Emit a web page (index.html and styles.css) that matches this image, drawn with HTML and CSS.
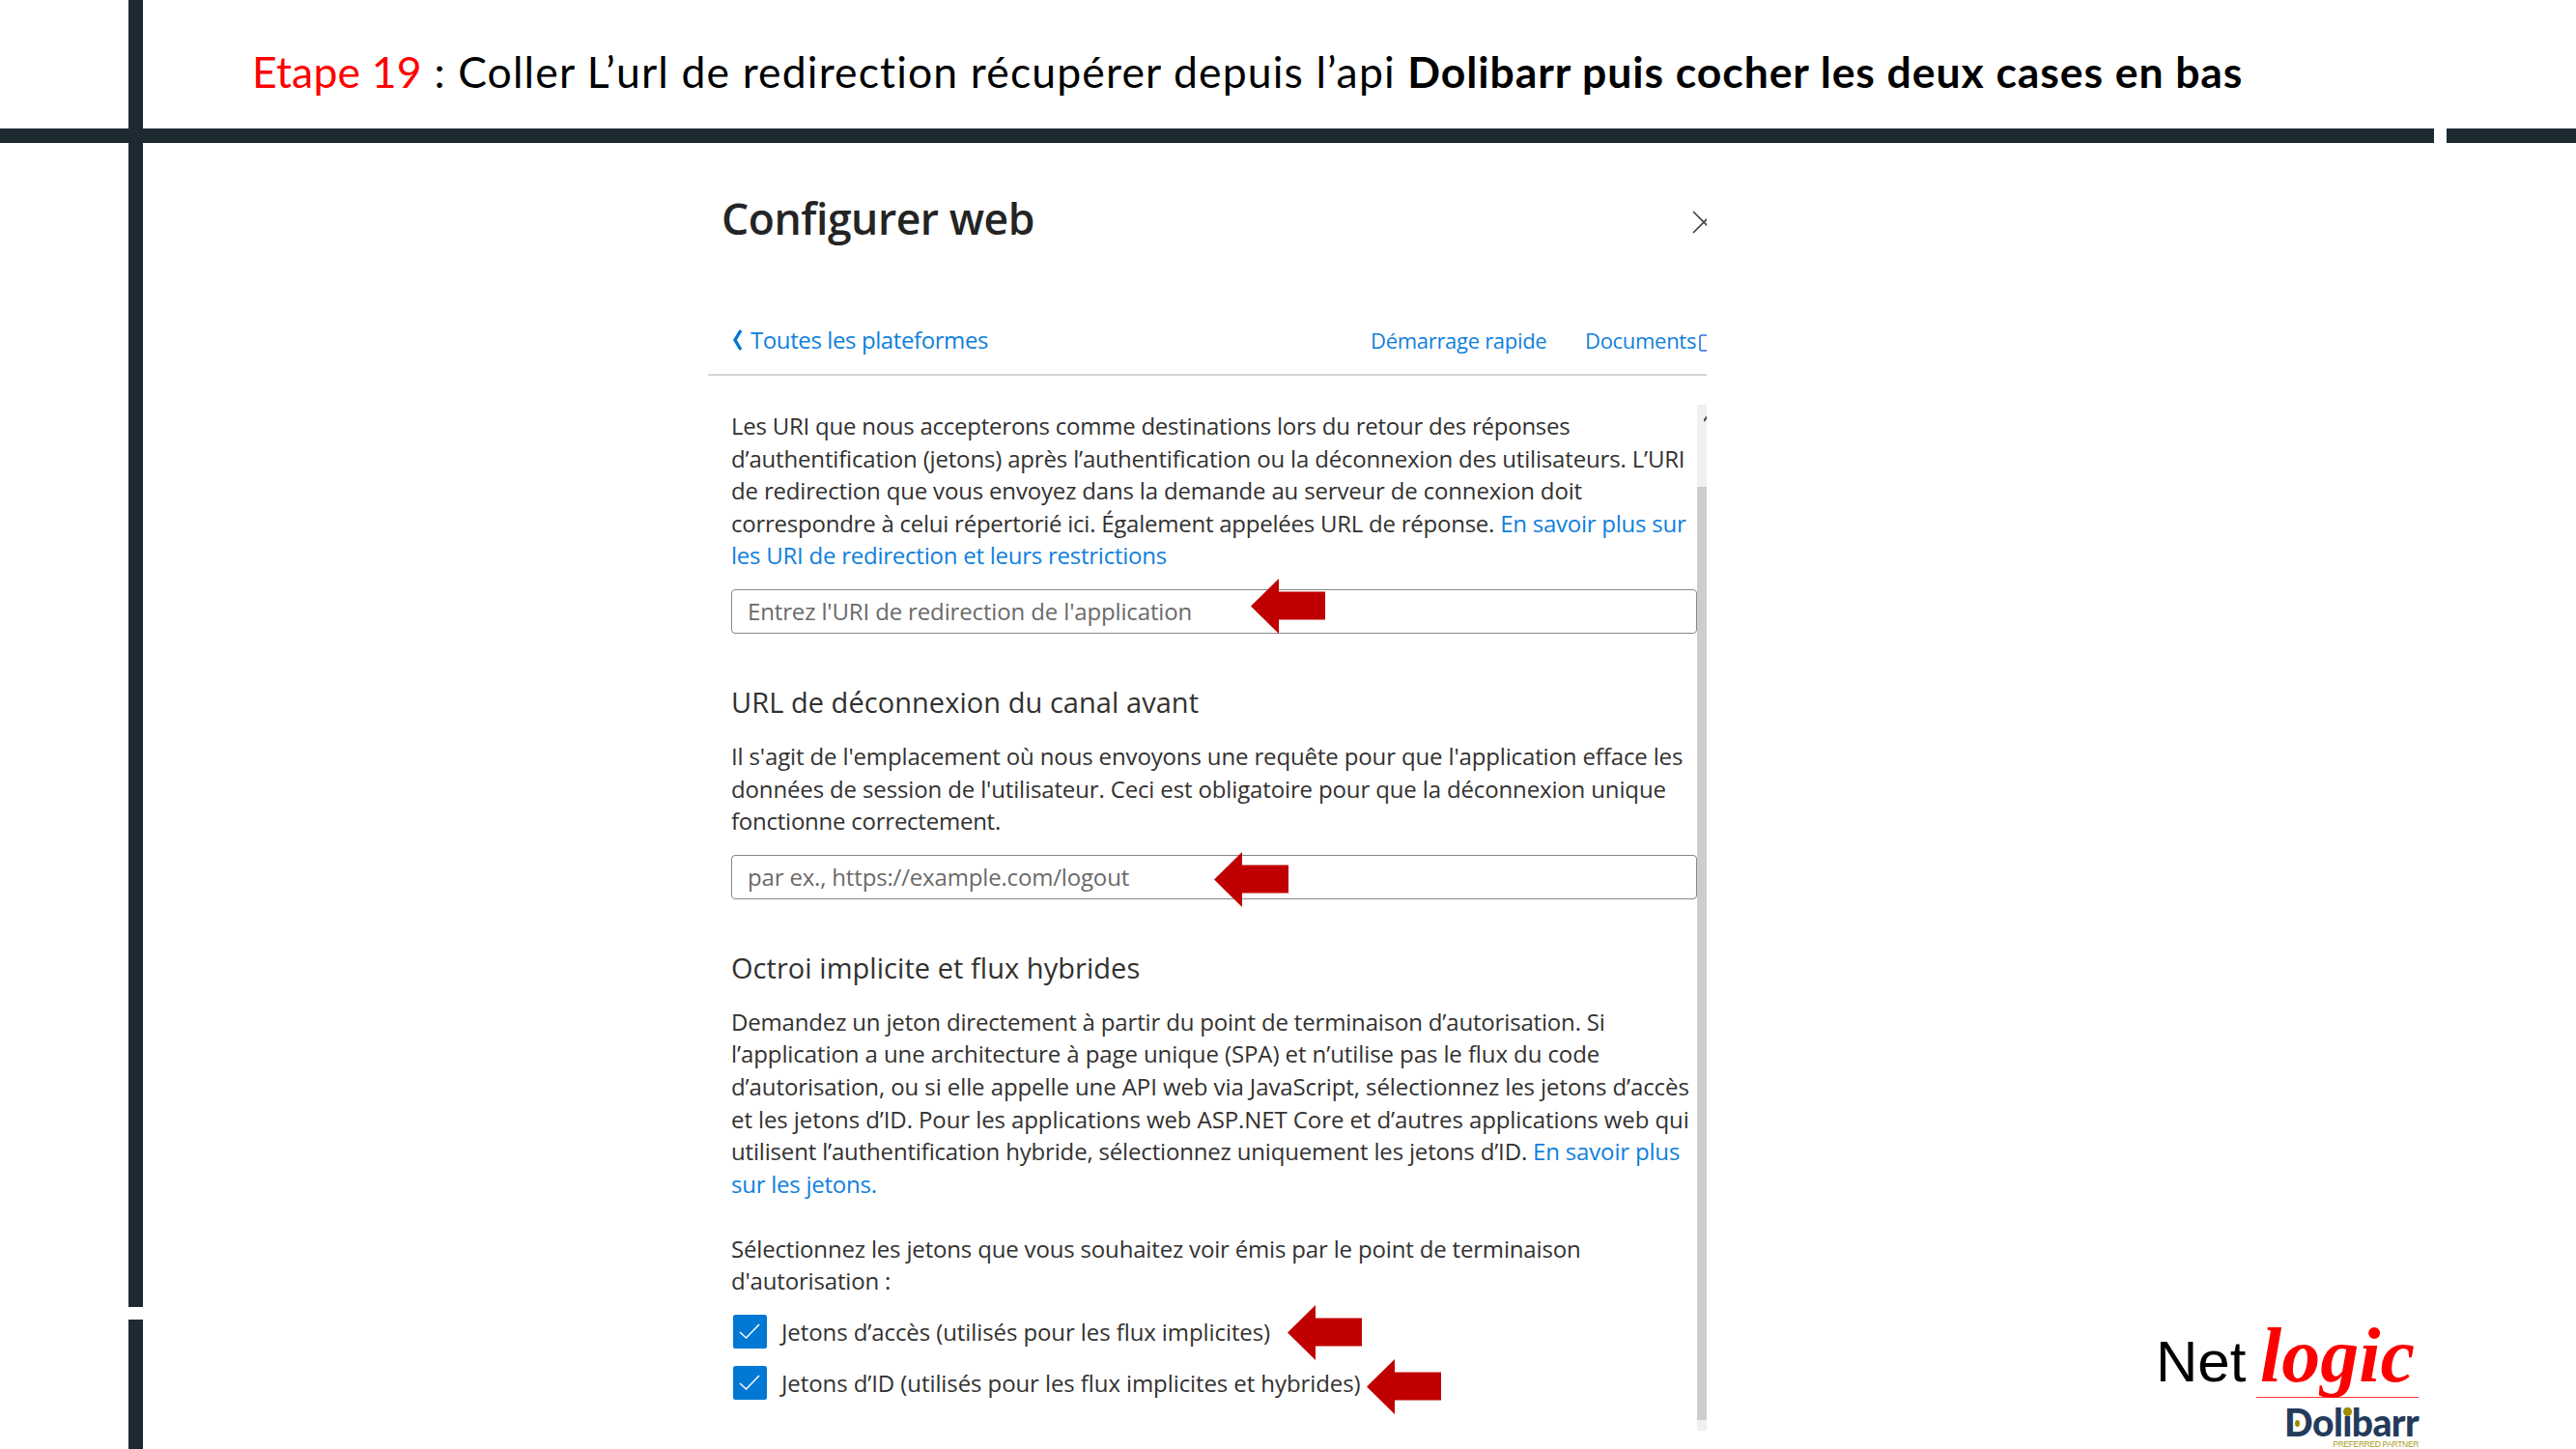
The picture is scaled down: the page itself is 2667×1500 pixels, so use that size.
FILE: index.html
```
<!DOCTYPE html>
<html lang="fr">
<head>
    <meta charset="UTF-8">
    <title>Etape 19</title>
    <link rel="stylesheet" href="styles.css">
</head>
<body>
    <div class="slide">
        <h1 class="slide-title"><span class="step">Etape 19</span> : Coller L’url de redirection récupérer depuis l’api <b>Dolibarr puis cocher les deux cases en bas</b></h1>
        <div class="rule-h"><i></i><i></i></div>
        <div class="rule-v"><i></i><i></i></div>

        <div class="panel">
            <div class="panel-head">
                <h2>Configurer web</h2>
                <svg class="close" width="15" height="24" viewBox="0 0 15 24"><path d="M1 1L23 23M1 23L23 1" stroke="#444" stroke-width="1.7" fill="none"/></svg>
            </div>
            <div class="nav">
                <svg width="12" height="22" viewBox="0 0 12 22"><path d="M10 1L4 11L10 21" stroke="#0078d4" stroke-width="3.4" fill="none"/></svg>
                <a class="back">Toutes les plateformes</a>
                <a class="quick">Démarrage rapide</a>
                <a class="docs">Documents</a>
                <svg class="ext" width="8" height="18" viewBox="0 0 8 18"><path d="M9 1H3Q1 1 1 3V15Q1 17 3 17H9" stroke="#2a6fd6" stroke-width="1.6" fill="none"/></svg>
            </div>

            <div class="scroll">
                <div class="content">
                    <p>
                        <span class="tight">Les URI que nous accepterons comme destinations lors du retour des réponses</span><br>
                        <span class="snug">d’authentification (jetons) après l’authentification ou la déconnexion des utilisateurs. L’URI</span><br>
                        <span class="snug">de redirection que vous envoyez dans la demande au serveur de connexion doit</span><br>
                        <span class="tight">correspondre à celui répertorié ici. Également appelées URL de réponse. <a>En savoir plus sur</a></span><br>
                        <a class="tight">les URI de redirection et leurs restrictions</a>
                    </p>
                    <div class="field">Entrez l'URI de redirection de l'application
                        <svg class="arrow arrow-1" viewBox="0 0 77 57"><path d="M0 28.5L29 0V13.5H77V42.5H29V57Z"/></svg>
                    </div>

                    <h3>URL de déconnexion du canal avant</h3>
                    <p>
                        Il s'agit de l'emplacement où nous envoyons une requête pour que l'application efface les<br>
                        données de session de l'utilisateur. Ceci est obligatoire pour que la déconnexion unique<br>
                        <span class="tight">fonctionne correctement.</span>
                    </p>
                    <div class="field"><span class="snug">par ex., https://example.com/logout</span>
                        <svg class="arrow arrow-2" viewBox="0 0 77 57"><path d="M0 28.5L29 0V13.5H77V42.5H29V57Z"/></svg>
                    </div>

                    <h3>Octroi implicite et flux hybrides</h3>
                    <p>
                        <span class="snug">Demandez un jeton directement à partir du point de terminaison d’autorisation. Si</span><br>
                        <span class="loose">l’application a une architecture à page unique (SPA) et n’utilise pas le flux du code</span><br>
                        <span class="loose">d’autorisation, ou si elle appelle une API web via JavaScript, sélectionnez les jetons d’accès</span><br>
                        <span class="loose">et les jetons d’ID. Pour les applications web ASP.NET Core et d’autres applications web qui</span><br>
                        <span class="snug">utilisent l’authentification hybride, sélectionnez uniquement les jetons d’ID. <a>En savoir plus</a></span><br>
                        <a class="tight">sur les jetons.</a>
                    </p>
                    <p class="choose snug">
                        Sélectionnez les jetons que vous souhaitez voir émis par le point de terminaison<br>
                        d'autorisation :
                    </p>
                    <div class="check loose">
                        <svg class="box" viewBox="0 0 35 35"><rect width="35" height="35" rx="2.5" fill="#0078d4"/><path d="M7 18L13.5 24L27 10" stroke="#fff" stroke-width="1.5" fill="none"/></svg>
                        Jetons d’accès (utilisés pour les flux implicites)
                        <svg class="arrow arrow-3" viewBox="0 0 77 57"><path d="M0 28.5L29 0V13.5H77V42.5H29V57Z"/></svg>
                    </div>
                    <div class="check loose">
                        <svg class="box" viewBox="0 0 35 35"><rect width="35" height="35" rx="2.5" fill="#0078d4"/><path d="M7 18L13.5 24L27 10" stroke="#fff" stroke-width="1.5" fill="none"/></svg>
                        Jetons d’ID (utilisés pour les flux implicites et hybrides)
                        <svg class="arrow arrow-4" viewBox="0 0 77 57"><path d="M0 28.5L29 0V13.5H77V42.5H29V57Z"/></svg>
                    </div>
                </div>
                <div class="scrollbar">
                    <svg width="10" height="85" viewBox="0 0 10 85"><path d="M7 18V15L10 11V15Z" fill="#505050"/></svg>
                    <div class="thumb"></div>
                </div>
            </div>
        </div>

        <div class="logo">
            <div class="brand"><span class="net">Net</span><span class="logic">logic</span></div>
            <div class="partner">
                <span class="dolibarr"><span class="d">D</span>ol<span class="i">i</span>barr</span>
                <span class="preferred">PREFERRED PARTNER</span>
            </div>
        </div>
    </div>
</body>
</html>
```
FILE: styles.css
```
* {
    box-sizing: border-box;
    margin: 0;
    padding: 0;
}
body {
    background: #fff;
    color: #323130;
    font-family: "Open Sans", sans-serif;
}
a {
    color: #0f80dc;
}
svg {
    display: block;
    flex: none;
}
.slide {
    position: relative;
    display: grid;
    grid-template-columns: 133px 15px 1fr;
    grid-template-rows: 133px 15px 1fr;
    width: 2667px;
    height: 1500px;
    overflow: hidden;
}
.slide-title {
    grid-area: 1 / 3;
    padding: 45px 0 0 113px;
    font-family: Lato, sans-serif;
    font-size: 44.5px;
    font-weight: 400;
    line-height: 58px;
    letter-spacing: 1.14px;
    color: #000;
    white-space: pre;
}
.slide-title b {
    letter-spacing: 0.93px;
}
.slide-title .step {
    letter-spacing: 0.2px;
    color: #f00;
}

/* dark cross made of two broken bars */
.rule-h,
.rule-v {
    display: flex;
    gap: 13px;
}
.rule-h {
    grid-area: 2 / 1 / 3 / 4;
}
.rule-v {
    grid-area: 1 / 2 / 4 / 3;
    flex-direction: column;
}
.rule-h i,
.rule-v i {
    flex: 1;
    background: #1d2a31;
}
.rule-h i:first-child {
    flex: none;
    width: 2520px;
}
.rule-v i:first-child {
    flex: none;
    height: 1353px;
}

.panel {
    grid-area: 3 / 3;
    width: 1034px;
    margin-left: 585px;
    padding-top: 48px;
    white-space: nowrap;
}
.panel-head {
    display: flex;
    justify-content: space-between;
    height: 60px;
    padding-left: 14px;
}
.panel-head h2 {
    font-size: 44.5px;
    font-weight: 600;
    line-height: 60px;
    letter-spacing: -0.45px;
    color: #242424;
}
.close {
    margin-top: 22px;
}
.nav {
    display: flex;
    align-items: center;
    height: 54px;
    margin-top: 79px;
    padding: 0 0 18px 24px;
    border-bottom: 2px solid #d4d4d4;
    font-size: 24px;
    line-height: 34px;
    letter-spacing: -0.4px;
}
.back {
    flex: 1;
    margin-left: 8px;
}
.quick,
.docs {
    width: 222px;
    font-size: 22px;
    letter-spacing: -0.3px;
}
.docs {
    width: 118px;
}
.ext {
    margin-top: 6px;
}

.scroll {
    display: flex;
    height: 1062px;
    margin-top: 30px;
}
.content {
    width: 1024px;
    padding: 5px 0 0 24px;
    font-size: 24px;
    line-height: 33.6px;
    letter-spacing: -0.14px;
}
.loose {
    letter-spacing: -0.09px;
}
.snug {
    letter-spacing: -0.17px;
}
.tight {
    letter-spacing: -0.24px;
}
.field {
    position: relative;
    height: 46px;
    margin: 18px 0 51px;
    padding-left: 16px;
    border: 1.5px solid #8a8886;
    border-radius: 4px;
    line-height: 44px;
    color: #6b6a69;
}
.content h3 {
    margin-bottom: 19px;
    font-size: 29px;
    font-weight: 400;
    line-height: 40px;
    letter-spacing: 0.05px;
}
.choose {
    margin: 33.5px 0 17.5px;
}
.check {
    position: relative;
    display: flex;
    gap: 15px;
    margin-bottom: 18px;
    padding-left: 2px;
    line-height: 35px;
}
.box {
    width: 35px;
    height: 35px;
}
.arrow {
    position: absolute;
    width: 77px;
    height: 57px;
    fill: #c00000;
}
.arrow-1 {
    left: 537px;
    top: -12px;
}
.arrow-2 {
    left: 499px;
    top: -4px;
}
.arrow-3 {
    left: 576px;
    top: -10px;
}
.arrow-4 {
    left: 658px;
    top: -7px;
}
.scrollbar {
    width: 10px;
    background: #f0f0f0;
}
.thumb {
    height: 966px;
    background: #cdcdcd;
}

.logo {
    position: absolute;
    left: 2232px;
    top: 1361px;
    width: 272px;
}
.brand {
    display: flex;
    align-items: baseline;
    height: 85px;
    line-height: 84px;
}
.net {
    width: 108px;
    font-family: "Liberation Sans", sans-serif;
    font-size: 60px;
    color: #000;
}
.logic {
    font-family: "Liberation Serif", serif;
    font-size: 80px;
    font-weight: 700;
    font-style: italic;
    color: #f00;
}
.partner {
    display: flex;
    flex-direction: column;
    align-items: flex-end;
    margin-left: 104px;
    padding-top: 7px;
    border-top: 1px solid #f33;
}
.dolibarr {
    font-family: Lato, sans-serif;
    font-size: 39px;
    font-weight: 900;
    line-height: 36px;
    letter-spacing: -0.6px;
    color: #243b5c;
}
.d,
.i {
    position: relative;
}
/* gold spots on the D and the i */
.d::after,
.i::after {
    content: "";
    position: absolute;
    border-radius: 50%;
    background: #a08c00;
}
.d::after {
    left: 11px;
    top: 21px;
    width: 5px;
    height: 7px;
}
.i::after {
    left: 1px;
    top: 8px;
    width: 9px;
    height: 9px;
}
.preferred {
    font-family: "Liberation Sans", sans-serif;
    font-size: 8.5px;
    line-height: 10px;
    letter-spacing: -0.35px;
    color: #a89c1c;
}
```
